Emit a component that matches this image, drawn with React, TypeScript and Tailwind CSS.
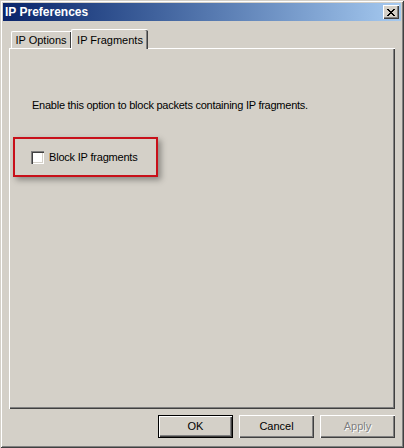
import React from "react";

const font = { fontFamily: '"Liberation Sans", Arial, sans-serif' };

function CloseGlyph() {
  // classic 8x7 pixel X
  const rows = ["XX....XX", ".XX..XX.", "..XXXX..", "...XX...", "..XXXX..", ".XX..XX.", "XX....XX"];
  return (
    <svg width="8" height="7" viewBox="0 0 8 7" shapeRendering="crispEdges">
      {rows.flatMap((r, y) =>
        r.split("").map((c, x) => (c === "X" ? <rect key={`${x}-${y}`} x={x} y={y} width="1" height="1" fill="#000" /> : null))
      )}
    </svg>
  );
}

function Button({ label, isDefault, disabled }: { label: string; isDefault?: boolean; disabled?: boolean }) {
  if (isDefault) {
    return (
      <div className="h-[23px] w-[75px] border border-black">
        <div className="flex h-full w-full items-center justify-center bg-[#d4d0c8] text-[11px] text-black shadow-[inset_1px_1px_#ffffff,inset_-1px_-1px_#404040,inset_-2px_-2px_#808080]">
          {label}
        </div>
      </div>
    );
  }
  return (
    <div
      className={`flex h-[23px] w-[75px] items-center justify-center bg-[#d4d0c8] text-[11px] shadow-[inset_1px_1px_#ffffff,inset_-1px_-1px_#404040,inset_-2px_-2px_#808080] ${
        disabled ? "text-[#808080] [text-shadow:1px_1px_0_#ffffff]" : "text-black"
      }`}
    >
      {label}
    </div>
  );
}

export default function App() {
  return (
    <div
      style={font}
      className="flex h-[448px] w-[404px] flex-col bg-[#d4d0c8] p-[3px] shadow-[inset_1px_1px_#d4d0c8,inset_-1px_-1px_#404040,inset_2px_2px_#ffffff,inset_-2px_-2px_#808080]"
    >
      {/* 타이틀 바 */}
      <div className="flex h-[18px] items-center justify-between bg-gradient-to-r from-[#0a246a] to-[#a6caf0] pl-[2px] pr-[2px]">
        <span className="text-[12px] font-bold leading-none text-white">IP Preferences</span>
        <div className="flex h-[14px] w-[16px] items-center justify-center bg-[#d4d0c8] shadow-[inset_1px_1px_#ffffff,inset_-1px_-1px_#404040,inset_-2px_-2px_#808080]">
          <CloseGlyph />
        </div>
      </div>

      <div className="flex flex-1 flex-col px-[6px] pt-[8px]">
        {/* 탭 */}
        <div className="relative z-10 -mb-[1px] flex h-[20px] items-end pl-[2px]">
          <div className="mb-[1px] flex h-[17px] w-[60px] items-center justify-center rounded-tl-[2px] border-l border-t border-white pr-[1px] text-[11px] text-black shadow-[inset_-1px_0_#404040]">
            IP Options
          </div>
          <div className="flex h-[20px] w-[77px] items-start justify-center rounded-tl-[2px] rounded-tr-[2px] border-l border-t border-white bg-[#d4d0c8] pt-[2px] text-[11px] text-black shadow-[inset_-1px_0_#404040,inset_-2px_0_#808080]">
            IP Fragments
          </div>
        </div>

        {/* 탭 패널 */}
        <div className="h-[361px] border-l border-t border-white shadow-[inset_-1px_-1px_#404040,inset_-2px_-2px_#808080]">
          <p className="pl-[22px] pt-[50px] text-[11px] leading-[13px] tracking-[-0.25px] text-black">
            Enable this option to block packets containing IP fragments.
          </p>
          <div className="ml-[3px] mt-[25px] flex h-[40px] w-[145px] items-center border-2 border-[#c8101a] pl-[16px] shadow-[3px_3px_6px_rgba(0,0,0,0.35)]">
            <div className="h-[13px] w-[13px] bg-white shadow-[inset_1px_1px_#808080,inset_2px_2px_#404040,inset_-1px_-1px_#ffffff,inset_-2px_-2px_#d4d0c8]" />
            <span className="ml-[5px] text-[11px] tracking-[-0.2px] text-black">Block IP fragments</span>
          </div>
        </div>

        {/* 버튼 */}
        <div className="mt-[6px] flex justify-end gap-[6px]">
          <Button label="OK" isDefault />
          <Button label="Cancel" />
          <Button label="Apply" disabled />
        </div>
      </div>
    </div>
  );
}
